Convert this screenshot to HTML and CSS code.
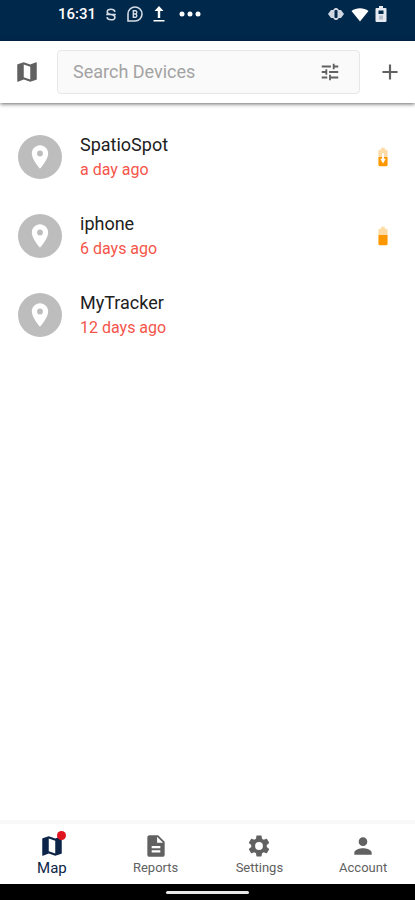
FILE: index.html
```html
<!DOCTYPE html>
<html lang="en">
<head>
<meta charset="utf-8">
<meta name="viewport" content="width=device-width, initial-scale=1">
<title>Devices</title>
<link rel="stylesheet" href="styles.css">
</head>
<body>
<svg class="defs" aria-hidden="true">
  <symbol id="map" viewBox="0 0 24 24"><path d="M20.500 3l-.16.03L15 5.100 9 3 3.360 4.900c-.21.07-.36.25-.36.48V20.500c0 .28.22.5.5.5l.16-.03L9 18.900l6 2.100 5.640-1.900c.21-.07.36-.25.36-.48V3.500c0-.28-.22-.5-.5-.5zM15 19l-6-2.110V5l6 2.110V19z"/></symbol>
  <symbol id="place" viewBox="0 0 24 24"><path d="M12 2C8.130 2 5 5.130 5 9c0 5.250 7 13 7 13s7-7.750 7-13c0-3.870-3.130-7-7-7zm0 9.500a2.500 2.500 0 1 1 0-5 2.500 2.500 0 0 1 0 5z"/></symbol>
</svg>
<header class="status">
  <div class="status-group">
    <span class="time">16:31</span>
    <svg class="s-icon" viewBox="0 0 16 16" fill="none" stroke="currentColor" stroke-width="1.800"><path d="M12.500 5C12 2.800 10.400 2 8 2 5.500 2 3.700 3 3.700 5c0 4.300 8.800 1.800 8.800 6 0 2-1.800 3-4.400 3-2.700 0-4.300-1-4.700-3M2.500 8h11"/></svg>
    <svg class="b-icon" viewBox="0 0 18 18" fill="none" stroke="currentColor" stroke-width="1.600"><path d="M2 16V9a7 7 0 1 1 7 7z"/><path d="M7.300 5.700v6.600h2.200a1.700 1.700 0 0 0 0-3.300 1.700 1.700 0 0 0 0-3.300zM7.300 9h2.200" stroke-width="1.400"/></svg>
    <svg class="up-icon" viewBox="0 0 14 16" fill="currentColor"><path d="M7 0l4.500 5H8.200v7H5.800V5H2.500zM1.500 14h11v1.500h-11z"/></svg>
    <svg class="dots" viewBox="0 0 22 6" fill="currentColor"><circle cx="3" cy="3" r="2.500"/><circle cx="11" cy="3" r="2.500"/><circle cx="19" cy="3" r="2.500"/></svg>
  </div>
  <div class="status-group status-right">
    <svg class="eye" viewBox="0 0 18 14"><path d="M1 7l3-4h2l2-2h2l2 2h2l3 4-3 4h-2l-2 2H8l-2-2H4z" fill="#cfd6e2"/><rect x="7.500" y="3" width="3" height="8" rx="1" fill="#00284b"/></svg>
    <svg class="wifi" viewBox="0 0 18 15" fill="currentColor"><path d="M9 14.500L.5 4C5 .2 13 .2 17.500 4z"/></svg>
    <svg class="cell" viewBox="0 0 12 16"><path d="M4 0h4v2h2.500q1 0 1 1v12q0 1-1 1h-9q-1 0-1-1V3q0-1 1-1H4z" fill="#e6eaf0"/><path d="M3.500 4.500h5V8h-5z" fill="#00284b"/><path d="M4 9.500h4v4H4z" fill="#b4bfcc"/></svg>
  </div>
</header>
<div class="appbar">
  <button class="icon-btn" aria-label="Show map"><svg class="icon"><use href="#map"/></svg></button>
  <div class="search">
    <input type="text" placeholder="Search Devices" aria-label="Search Devices">
    <button class="icon-btn" aria-label="Filter"><svg class="icon-small" viewBox="0 0 24 24"><path d="M3 17v2h6v-2H3zM3 5v2h10V5H3zm10 16v-2h8v-2h-8v-2h-2v6h2zM7 9v2H3v2h4v2h2V9H7zm14 4v-2H11v2h10zm-6-4h2V7h4V5h-4V3h-2v6z"/></svg></button>
  </div>
  <button class="icon-btn" aria-label="Add device"><svg class="icon" viewBox="0 0 24 24"><path d="M19 13h-6v6h-2v-6H5v-2h6V5h2v6h6v2z"/></svg></button>
</div>
<main>
  <ul class="devices">
    <li class="device">
      <span class="avatar"><svg><use href="#place"/></svg></span>
      <div class="info"><p class="name">SpatioSpot</p><p class="seen">a day ago</p></div>
      <svg class="battery" viewBox="0 0 24 24" role="img" aria-label="Charging"><path d="M10 2h4v2h1.700c.7 0 1.300.6 1.300 1.300V12H7V5.300C7 4.600 7.600 4 8.300 4H10z" fill="#ffdca6"/><path d="M7 12h10v8.700c0 .7-.6 1.300-1.300 1.300H8.300c-.7 0-1.300-.6-1.300-1.300z" fill="#ff9800"/><path d="M11 8h2v6h2l-3 5-3-5h2z" fill="#fff"/></svg>
    </li>
    <li class="device">
      <span class="avatar"><svg><use href="#place"/></svg></span>
      <div class="info"><p class="name">iphone</p><p class="seen">6 days ago</p></div>
      <svg class="battery" viewBox="0 0 24 24" role="img" aria-label="Battery half full"><path d="M10 2h4v2h1.700c.7 0 1.300.6 1.300 1.300V11H7V5.300C7 4.600 7.600 4 8.300 4H10z" fill="#ffdca6"/><path d="M7 11h10v9.700c0 .7-.6 1.300-1.300 1.300H8.300c-.7 0-1.300-.6-1.300-1.300z" fill="#ff9800"/></svg>
    </li>
    <li class="device">
      <span class="avatar"><svg><use href="#place"/></svg></span>
      <div class="info"><p class="name">MyTracker</p><p class="seen">12 days ago</p></div>
    </li>
  </ul>
</main>
<nav class="tabs">
  <a class="tab active" href="#map-tab"><span class="tab-icon"><svg class="icon"><use href="#map"/></svg><span class="badge"></span></span>Map</a>
  <a class="tab" href="#reports"><svg class="icon" viewBox="0 0 24 24"><path d="M14 2H6c-1.100 0-1.990.9-1.990 2L4 20c0 1.100.89 2 1.990 2H18c1.100 0 2-.9 2-2V8l-6-6zm2 16H8v-2h8v2zm0-4H8v-2h8v2zm-3-5V3.500L18.500 9H13z"/></svg>Reports</a>
  <a class="tab" href="#settings"><svg class="icon" viewBox="0 0 24 24"><path d="M19.140 12.940c.04-.3.06-.61.06-.94 0-.32-.02-.64-.07-.94l2.030-1.580c.18-.14.23-.41.12-.61l-1.920-3.320c-.12-.22-.37-.29-.59-.22l-2.390.96c-.5-.38-1.030-.7-1.620-.94l-.36-2.540c-.04-.24-.24-.41-.48-.41h-3.840c-.24 0-.43.17-.47.41l-.36 2.540c-.59.24-1.130.57-1.620.94l-2.390-.96c-.22-.08-.47 0-.59.22L2.740 8.870c-.12.21-.08.47.12.61l2.030 1.580c-.05.3-.09.63-.09.94s.02.64.07.94l-2.030 1.580c-.18.14-.23.41-.12.61l1.920 3.320c.12.22.37.29.59.22l2.390-.96c.5.38 1.030.7 1.620.94l.36 2.540c.05.24.24.41.48.41h3.840c.24 0 .44-.17.47-.41l.36-2.540c.59-.24 1.130-.56 1.620-.94l2.390.96c.22.08.47 0 .59-.22l1.920-3.320c.12-.22.07-.47-.12-.61l-2.010-1.580zM12 15.600a3.600 3.600 0 1 1 0-7.200 3.600 3.600 0 0 1 0 7.200z"/></svg>Settings</a>
  <a class="tab" href="#account"><svg class="icon" viewBox="0 0 24 24"><path d="M12 12c2.210 0 4-1.790 4-4s-1.790-4-4-4-4 1.790-4 4 1.790 4 4 4zm0 2c-2.670 0-8 1.340-8 4v2h16v-2c0-2.660-5.330-4-8-4z"/></svg>Account</a>
</nav>
<footer class="gesture"><span></span></footer>
</body>
</html>
```
FILE: styles.css
```css
* { box-sizing: border-box; }
body {
  margin: 0;
  min-height: 100vh;
  display: flex;
  flex-direction: column;
  background: #fff;
  color: #212121;
  font-family: Roboto, "Liberation Sans", sans-serif;
}
svg { display: block; fill: currentColor; }
svg[fill="none"] { fill: none; }
.defs { position: absolute; width: 0; height: 0; }
button { border: 0; padding: 0; background: none; color: inherit; font: inherit; }
p { margin: 0; }

.status {
  height: 41px;
  padding: 4px 28px 0 58px;
  display: flex;
  justify-content: space-between;
  align-items: flex-start;
  background: #00284b;
  color: #fff;
}
.status-group { display: flex; align-items: center; height: 20px; gap: 8px; }
.status-right { gap: 6px; }
.time { font-size: 15px; font-weight: 500; }
.s-icon { width: 14px; height: 15px; color: #d5dce6; }
.b-icon { width: 18px; height: 18px; color: #d5dce6; }
.up-icon { width: 14px; height: 16px; }
.dots { width: 24px; height: 6px; margin-left: 4px; }
.eye { width: 18px; height: 14px; }
.wifi { width: 18px; height: 15px; }
.cell { width: 12px; height: 16px; }

.appbar {
  height: 62px;
  padding: 0 12px 0 14px;
  display: flex;
  align-items: center;
  gap: 17px;
  background: #fff;
  color: #616161;
  box-shadow: 0 1px 4px rgba(0, 0, 0, .6);
}
.icon { width: 26px; height: 26px; }
.icon-small { width: 22px; height: 22px; }
.search {
  flex: 1;
  min-width: 0;
  height: 44px;
  padding: 0 18px 0 15px;
  display: flex;
  align-items: center;
  border: 1px solid #e6e8e8;
  border-radius: 4px;
  background: #fafafa;
}
.search input {
  flex: 1;
  min-width: 0;
  border: 0;
  padding: 0;
  outline: 0;
  background: none;
  color: #212121;
  font: 18px/22px Roboto, "Liberation Sans", sans-serif;
}
.search input::placeholder { color: #a3a3a3; opacity: 1; }

main { flex: 1; }
.devices { list-style: none; margin: 0; padding: 14px 0 0; }
.device {
  height: 79px;
  padding: 0 21px 0 18px;
  display: flex;
  align-items: center;
  gap: 18px;
}
.avatar {
  width: 44px;
  height: 44px;
  display: grid;
  place-items: center;
  border-radius: 50%;
  background: #bdbdbd;
  color: #fff;
}
.avatar svg { width: 28px; height: 28px; }
.info { flex: 1; }
.name { font-size: 18px; line-height: 25px; }
.seen { font-size: 16px; line-height: 25px; color: #f4554a; }
.battery { width: 22px; height: 22px; }

.tabs {
  height: 64px;
  padding-top: 9px;
  display: flex;
  border-top: 4px solid #f8f8f8;
  background: #fff;
}
.tab {
  flex: 1;
  display: flex;
  flex-direction: column;
  align-items: center;
  color: #616161;
  font-size: 13px;
  line-height: 18px;
  text-decoration: none;
}
.tab.active { color: #0b2447; font-size: 15px; }
.tab-icon { position: relative; }
.badge {
  position: absolute;
  top: -2px;
  right: -1px;
  width: 9px;
  height: 9px;
  border-radius: 50%;
  background: #e0141e;
}
.gesture {
  height: 16px;
  display: flex;
  justify-content: center;
  align-items: center;
  background: #000;
}
.gesture span { width: 20%; height: 3px; border-radius: 2px; background: #e8e8e8; }
```
